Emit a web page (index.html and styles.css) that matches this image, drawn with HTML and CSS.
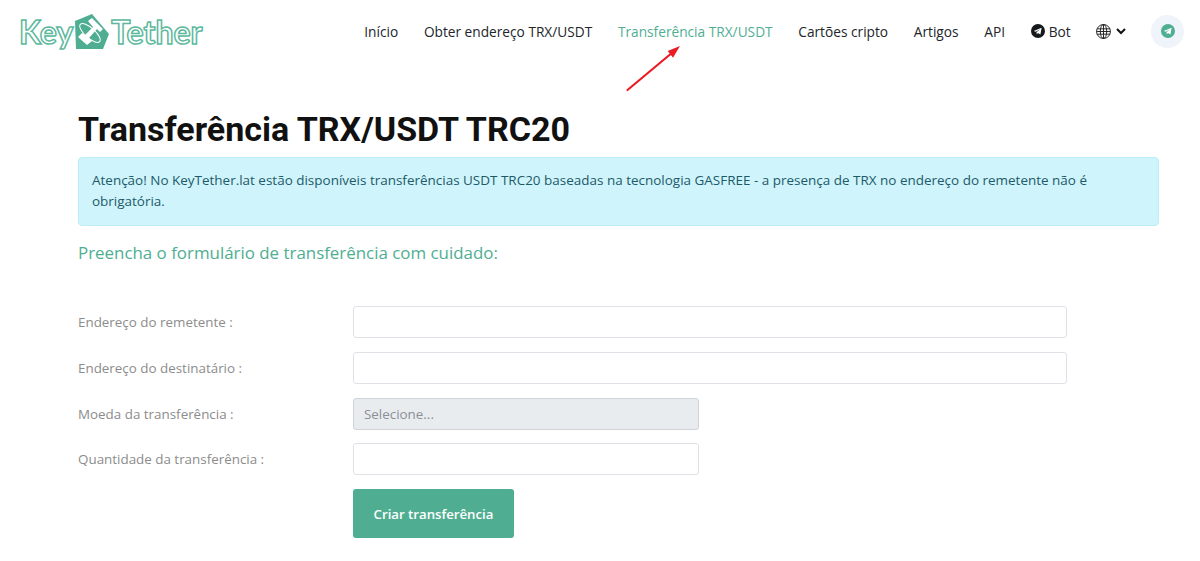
FILE: index.html

```html
<!DOCTYPE html>
<html lang="pt">
<head>
  <meta charset="UTF-8" />
  <meta name="viewport" content="width=device-width, initial-scale=1.0"/>
  <title>Transferência TRX/USDT</title>
  <link rel="stylesheet" href="styles.css">
</head>
<body>

<header class="topbar">
  <a class="logo" href="#">
    <span class="logo-word">Key</span>
    <svg class="logo-mark" width="34" height="35" viewBox="0 0 34 35">
      <path d="M0 7 L17 0 L34 20 L28 35 L1 35 Z" fill="#4fae92"/>
      <path d="M13 7 L17 4 L28 15 L25 18 L22 15 L14 24 L17 27 L12 31 L3 23 L7 19 L10 21 L18 13 Z" fill="#fff"/>
      <ellipse cx="15" cy="19" rx="5" ry="13" transform="rotate(-48 15 19)" fill="none" stroke="#fff" stroke-width="1"/>
    </svg>
    <span class="logo-word">Tether</span>
  </a>
  <nav class="menu">
    <a href="#">Início</a>
    <a href="#">Obter endereço TRX/USDT</a>
    <a href="#" class="active">Transferência TRX/USDT</a>
    <a href="#">Cartões cripto</a>
    <a href="#">Artigos</a>
    <a href="#">API</a>
    <a href="#" class="bot">
      <svg width="14" height="14" viewBox="0 0 14 14">
        <circle cx="7" cy="7" r="7" fill="#15191c"/>
        <path d="M2.800 6.900 L10.600 3.700 L9.400 10.600 L7 9 L5.800 10.200 L5.500 8.300 L9 5.200 L4.700 7.800 Z" fill="#fff"/>
      </svg>
      Bot
    </a>
    <a href="#" class="lang">
      <svg width="15" height="15" viewBox="0 0 14 14" fill="none" stroke="#222" stroke-width="0.900">
        <circle cx="7" cy="7" r="6.500"/>
        <ellipse cx="7" cy="7" rx="3" ry="6.500"/>
        <path d="M7 .5 V13.500 M1 4.500 H13 M.5 7 H13.500 M1 9.500 H13"/>
      </svg>
      <svg width="10" height="7" viewBox="0 0 10 7" fill="none" stroke="#111" stroke-width="2">
        <path d="M1 1 L5 5 L9 1"/>
      </svg>
    </a>
    <a href="#" class="tg-round">
      <svg width="14" height="14" viewBox="0 0 14 14">
        <circle cx="7" cy="7" r="7" fill="#4fae92"/>
        <path d="M2.800 6.900 L10.600 3.700 L9.400 10.600 L7 9 L5.800 10.200 L5.500 8.300 L9 5.200 L4.700 7.800 Z" fill="#fff"/>
      </svg>
    </a>
  </nav>
</header>

<svg class="arrow" width="60" height="50" viewBox="0 0 60 50">
  <path d="M1.500 47 L44 11.500" stroke="#ea1c24" stroke-width="2.200" stroke-linecap="round"/>
  <path d="M54 3 L41.700 8 L47 14.700 Z" fill="#ea1c24"/>
</svg>

<main class="content">
  <h1>Transferência TRX/USDT TRC20</h1>
  <div class="alert">Atenção! No KeyTether.lat estão disponíveis transferências USDT TRC20 baseadas na tecnologia GASFREE - a presença de TRX no endereço do remetente não é obrigatória.</div>
  <h2>Preencha o formulário de transferência com cuidado:</h2>

  <form class="form">
    <div class="row">
      <label>Endereço do remetente :</label>
      <input type="text" class="field" />
    </div>
    <div class="row">
      <label>Endereço do destinatário :</label>
      <input type="text" class="field" />
    </div>
    <div class="row">
      <label>Moeda da transferência :</label>
      <div class="field short disabled">Selecione...</div>
    </div>
    <div class="row">
      <label>Quantidade da transferência :</label>
      <input type="text" class="field short" />
    </div>
    <div class="row">
      <label></label>
      <button type="button" class="submit">Criar transferência</button>
    </div>
  </form>
</main>

</body>
</html>
```

FILE: styles.css

```css
* {
  box-sizing: border-box;
}
body {
  margin: 0;
  font-family: 'Open Sans', sans-serif;
  font-size: 13.400px;
  color: #212529;
  background: #fff;
}
a {
  color: inherit;
  text-decoration: none;
}
.topbar {
  display: flex;
  align-items: center;
  justify-content: space-between;
  height: 62px;
  padding: 0 16px 0 19px;
}
.logo {
  display: flex;
  align-items: center;
  gap: 2px;
}
.logo-word {
  font-family: 'Lato', sans-serif;
  font-size: 32px;
  font-weight: 700;
  color: #fff;
  -webkit-text-stroke: 1.500px #5cb89c;
}
.menu {
  display: flex;
  align-items: center;
  gap: 25.700px;
  font-size: 13.700px;
}
.menu a {
  display: flex;
  align-items: center;
}
.menu .active {
  color: #4fae92;
}
.bot {
  gap: 4px;
}
.lang {
  gap: 5px;
  margin-right: -1px;
}
.tg-round {
  justify-content: center;
  width: 33px;
  height: 33px;
  border-radius: 50%;
  background: #eff4fb;
}
.arrow {
  position: absolute;
  left: 626px;
  top: 43px;
}
.content {
  padding: 0 41px 0 78px;
}
h1 {
  margin: 46px 0 0;
  height: 49px;
  font-family: 'Roboto', sans-serif;
  font-size: 34px;
  font-weight: 700;
  line-height: 43px;
  color: #111;
}
.alert {
  height: 69px;
  padding: 12px 13px;
  border: 1px solid #bdeef8;
  border-radius: 4px;
  background: #cff4fc;
  color: #1d5a68;
  font-size: 13.470px;
  line-height: 21px;
}
h2 {
  margin: 15px 0 0;
  font-size: 16.900px;
  font-weight: 400;
  line-height: 24px;
  color: #4fae92;
}
.form {
  margin-top: 41px;
}
.row {
  display: flex;
  align-items: center;
  margin-bottom: 13.800px;
}
.row label {
  width: 275px;
  flex: none;
  color: #8c8c8c;
}
.field {
  width: 714px;
  height: 32px;
  padding: 0 10px;
  border: 1px solid #dee2e6;
  border-radius: 3px;
  background: #fff;
}
.short {
  width: 346px;
}
.disabled {
  display: flex;
  align-items: center;
  border-color: #ced4da;
  background: #e9ecef;
  color: #8b9096;
}
.submit {
  height: 49px;
  width: 161px;
  border: none;
  border-radius: 3px;
  background: #4fae92;
  color: #fff;
  font-family: 'Open Sans', sans-serif;
  font-size: 13.200px;
  font-weight: 600;
}
```
